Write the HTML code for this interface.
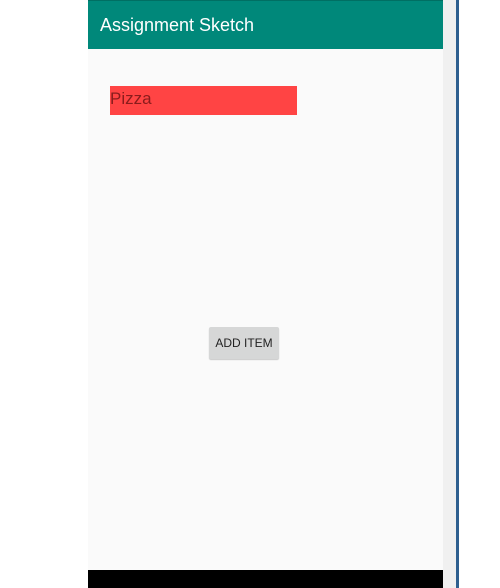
<!DOCTYPE html>
<html><head><style>
body{margin:0;width:500px;height:588px;background:#fff;position:relative;overflow:hidden;font-family:"Liberation Sans",sans-serif}
div{position:absolute}
</style></head><body>
<div style="left:88px;top:0;width:355px;height:570px;background:#fafafa"></div>
<div style="left:88px;top:0;width:355px;height:49px;background:#00887a;border-top:1px solid #006f63;box-sizing:border-box"></div>
<div style="left:100px;top:14px;color:#fff;font-size:18px;line-height:22px">Assignment Sketch</div>
<div style="left:110px;top:86px;width:187px;height:29px;background:#ff4444"></div>
<div style="left:110px;top:88px;color:#8a1c1c;font-size:17px;line-height:22px">Pizza</div>
<div style="left:209px;top:327px;width:70px;height:32px;background:#d6d7d7;border-radius:2px;box-shadow:0 1px 1px rgba(0,0,0,.2);font-size:12px;line-height:32px;text-align:center;color:#222">ADD ITEM</div>
<div style="left:88px;top:570px;width:355px;height:18px;background:#000"></div>
<div style="left:443px;top:0;width:13px;height:588px;background:#f0f0f0"></div>
<div style="left:456px;top:0;width:3px;height:588px;background:#2e5f8f"></div>
</body></html>
